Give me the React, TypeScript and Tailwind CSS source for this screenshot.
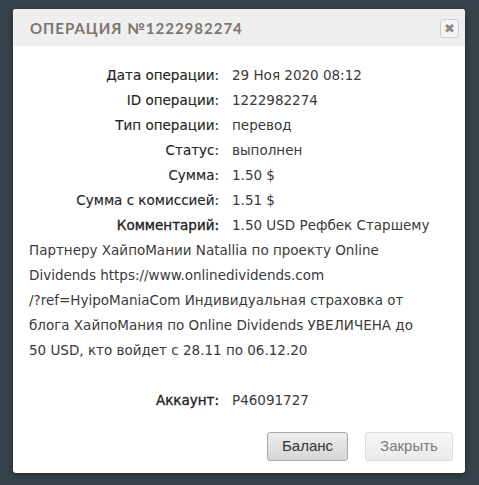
import React from 'react';

function App() {
  const rows = [
    { label: 'Дата операции:', value: '29 Ноя 2020 08:12' },
    { label: 'ID операции:', value: '1222982274' },
    { label: 'Тип операции:', value: 'перевод' },
    { label: 'Статус:', value: 'выполнен' },
    { label: 'Сумма:', value: '1.50 $' },
    { label: 'Сумма с комиссией:', value: '1.51 $' },
  ];

  return (
    <div className="w-[479px] h-[485px] bg-[#36434b] pt-[9px] pl-[13px]">
      <div className="w-[452px] h-[464px] bg-white rounded-[3px] shadow-[0_2px_6px_rgba(0,0,0,0.4)] flex flex-col overflow-hidden">
        {/* Header */}
        <div className="h-[37px] bg-[#efefef] flex items-center justify-between pl-[17px] pr-[6px] pt-[2px]">
          <h1 className="font-['Lato',sans-serif] font-bold text-[15px] tracking-[1px] text-[#7b7570] uppercase">
            Операция №1222982274
          </h1>
          <button className="w-[19px] h-[19px] border border-[#cfcfcf] rounded-[3px] bg-[#f4f4f4] flex items-center justify-center text-[#8a8a8a] text-[13px] font-bold leading-none font-['DejaVu_Sans',sans-serif]">
            ✖
          </button>
        </div>

        {/* Body */}
        <div className="flex-1 pt-[17px] pl-[16px] pr-[29px] font-['DejaVu_Sans',sans-serif] text-[13.5px] text-[#3a3a3a] leading-[25px]">
          {rows.map((row) => (
            <div key={row.label} className="flex">
              <span className="w-[190px] text-right text-[#262626] [-webkit-text-stroke:0.15px_#262626]">{row.label}</span>
              <span className="ml-[13px]">{row.value}</span>
            </div>
          ))}
          <p>
            <span className="inline-block w-[190px] text-right text-[#222] [-webkit-text-stroke:0.35px_#222]">Комментарий:</span>
            <span className="ml-[13px]">
              1.50 USD Рефбек Старшему Партнеру ХайпоМании Natallia по проекту Online Dividends https://www.onlinedividends.com{' '}
              <span className="whitespace-nowrap">/?ref=HyipoManiaCom</span> Индивидуальная страховка от блога ХайпоМания по Online Dividends УВЕЛИЧЕНА до{' '}
              <span className="whitespace-nowrap">50 USD,</span> кто войдет с 28.11 по 06.12.20
            </span>
          </p>
          <div className="flex mt-[25px]">
            <span className="w-[190px] text-right text-[#222] [-webkit-text-stroke:0.35px_#222]">Аккаунт:</span>
            <span className="ml-[13px]">P46091727</span>
          </div>
        </div>

        {/* Footer */}
        <div className="flex justify-end gap-[17px] pr-[12px] pb-[12px] font-['Liberation_Sans',sans-serif]">
          <button className="w-[81px] h-[29px] rounded-[3px] border border-[#a9a9a9] bg-gradient-to-b from-[#ededed] to-[#d6d6d6] text-[15px] text-[#333]">
            Баланс
          </button>
          <button className="w-[88px] h-[29px] rounded-[3px] border border-[#dcdcdc] bg-gradient-to-b from-[#f6f6f6] to-[#ebebeb] text-[15px] text-[#7a7a7a]">
            Закрыть
          </button>
        </div>
      </div>
    </div>
  );
}

export default App;
